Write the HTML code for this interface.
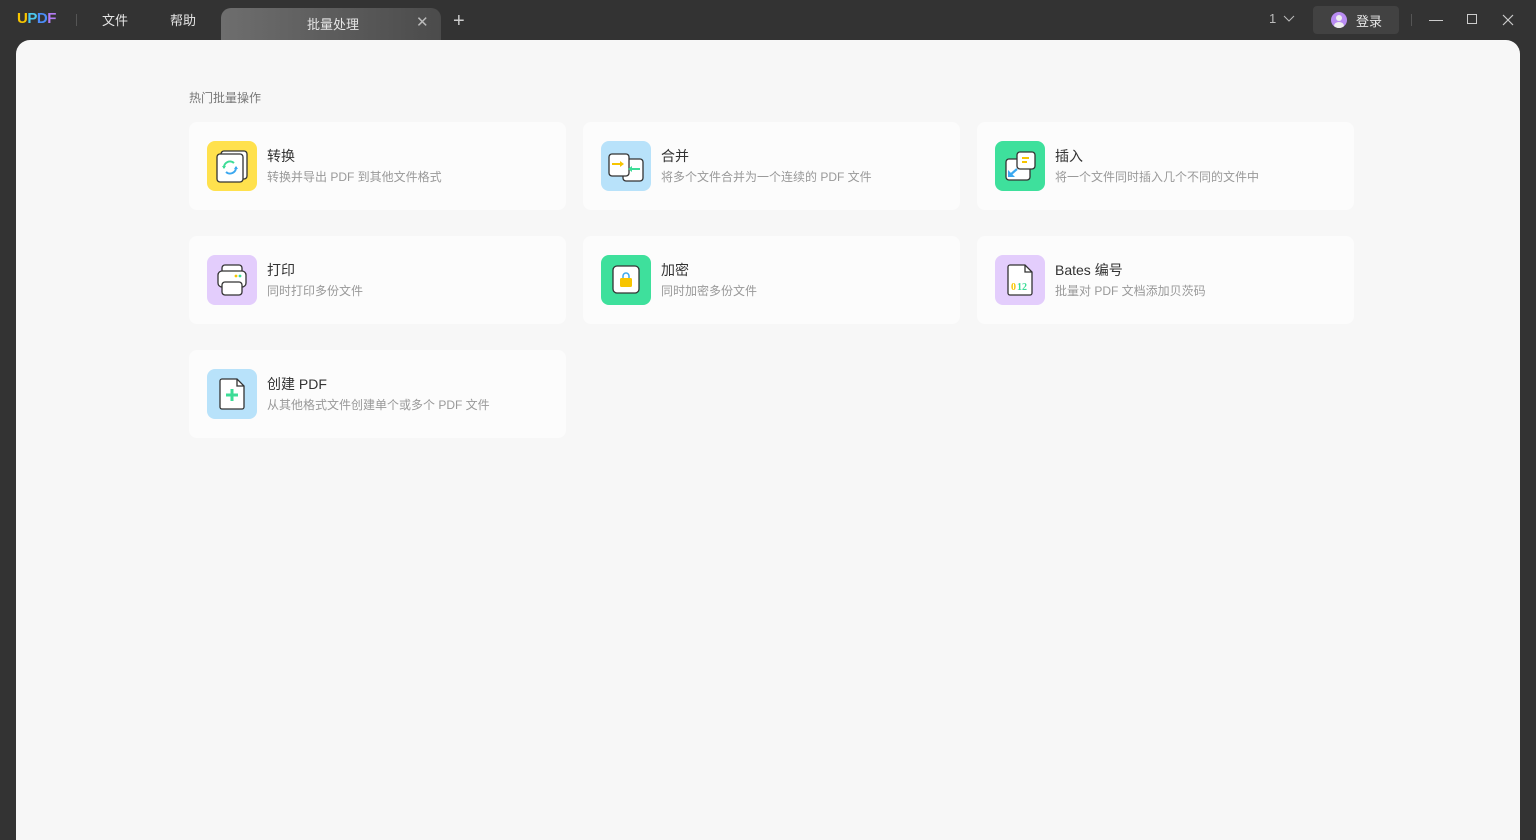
<!DOCTYPE html>
<html><head><meta charset="utf-8"><style>
*{margin:0;padding:0;box-sizing:border-box}
body{width:1536px;height:832px;background:#333;font-family:"Liberation Sans","Noto Sans CJK SC",sans-serif;position:relative;overflow:hidden}
.a{position:absolute}
.top{color:#e6e6e6;font-size:13px}
.main{left:16px;top:40px;width:1504px;height:800px;background:#f7f7f7;border-radius:14px 14px 0 0}
.card{position:absolute;width:377px;height:88px;background:#fcfcfc;border-radius:8px}
.ic{position:absolute;left:18px;top:19px;width:50px;height:50px;border-radius:8px}
.t{position:absolute;left:78px;top:24px;font-size:14px;color:#333}
.s{position:absolute;left:78px;top:46px;font-size:12px;color:#999}
.ic svg{position:absolute;left:0;top:0}
</style></head><body>
<div class="a" style="left:17px;top:10px;font-size:15px;font-weight:bold;letter-spacing:-0.5px"><span style="color:#f7c500">U</span><span style="color:#4cc9f0">P</span><span style="color:#4b8df8">D</span><span style="color:#b57cf5">F</span></div>
<div class="a" style="left:76px;top:14px;width:1px;height:12px;background:#555"></div>
<div class="a top" style="left:102px;top:10px">文件</div>
<div class="a top" style="left:170px;top:10px">帮助</div>
<div class="a" style="left:221px;top:8px;width:220px;height:32px;border-radius:10px 10px 0 0;background:linear-gradient(90deg,#6e6e6e,#4b4b4b)"></div>
<div class="a top" style="left:307px;top:14px">批量处理</div>
<div class="a" style="left:416px;top:13px;color:#bbb;font-size:15px">✕</div>
<div class="a" style="left:453px;top:10px;color:#ccc;font-size:20px;font-weight:300">+</div>
<div class="a top" style="left:1269px;top:11px;color:#bbb">1</div>
<svg class="a" style="left:1283px;top:15px" width="12" height="8"><path d="M1 1l5 5 5-5" stroke="#bbb" fill="none"/></svg>
<div class="a" style="left:1313px;top:6px;width:86px;height:28px;background:#424242;border-radius:4px"></div>
<div class="a" style="left:1331px;top:12px;width:16px;height:16px;border-radius:50%;background:#b98cf2;overflow:hidden"><div class="a" style="left:5px;top:3px;width:6px;height:6px;border-radius:50%;background:#eee"></div><div class="a" style="left:3px;top:10px;width:10px;height:8px;border-radius:50%;background:#eee"></div></div>
<div class="a top" style="left:1356px;top:11px">登录</div>
<div class="a" style="left:1411px;top:14px;width:1px;height:12px;background:#555"></div>
<div class="a" style="left:1429px;top:20px;width:14px;height:1px;background:#ccc"></div>
<div class="a" style="left:1467px;top:14px;width:10px;height:10px;border:1px solid #ccc"></div>
<svg class="a" style="left:1502px;top:14px" width="12" height="12"><path d="M1 1l10 10M11 1L1 11" stroke="#ccc" stroke-width="1.2"/></svg>

<div class="a main"></div>
<div class="a" style="left:189px;top:89px;font-size:12px;color:#777">热门批量操作</div>

<div class="card" style="left:189px;top:122px"><div class="ic" style="background:#ffe14d"><svg width="50" height="50"><rect x="14" y="10" width="26" height="28" rx="3" fill="#fff" stroke="#333" stroke-width="1.3"/><rect x="10" y="13" width="26" height="28" rx="3" fill="#fff" stroke="#333" stroke-width="1.3"/><path d="M17 27a6 6 0 0 1 10-5" stroke="#3ddc97" stroke-width="2" fill="none"/><path d="M29 26a6 6 0 0 1-10 5" stroke="#3ba8f0" stroke-width="2" fill="none"/><path d="M15 25l2 3 2-3z" fill="#3ddc97"/><path d="M27 28l2-3 2 3z" fill="#3ba8f0"/></svg></div><div class="t">转换</div><div class="s">转换并导出 PDF 到其他文件格式</div></div>
<div class="card" style="left:583px;top:122px"><div class="ic" style="background:#b8e2fa"><svg width="50" height="50"><rect x="22" y="18" width="20" height="22" rx="3" fill="#fff" stroke="#333" stroke-width="1.3"/><rect x="8" y="13" width="20" height="22" rx="3" fill="#fff" stroke="#333" stroke-width="1.3"/><path d="M11 23h9" stroke="#f7c500" stroke-width="2"/><path d="M19 20l4 3-4 3z" fill="#f7c500"/><path d="M31 28h8" stroke="#3ddc97" stroke-width="2"/><path d="M31 25l-4 3 4 3z" fill="#3ddc97"/></svg></div><div class="t">合并</div><div class="s">将多个文件合并为一个连续的 PDF 文件</div></div>
<div class="card" style="left:977px;top:122px"><div class="ic" style="background:#3ee09c"><svg width="50" height="50"><rect x="11" y="18" width="24" height="21" rx="3" fill="#fff" stroke="#333" stroke-width="1.3"/><rect x="22" y="11" width="18" height="17" rx="3" fill="#fff" stroke="#333" stroke-width="1.3"/><path d="M27 17h7M27 21h5" stroke="#f7c500" stroke-width="2"/><path d="M22 28l-8 7" stroke="#3ba8f0" stroke-width="2.2"/><path d="M13 29v7h7z" fill="#3ba8f0"/></svg></div><div class="t">插入</div><div class="s">将一个文件同时插入几个不同的文件中</div></div>

<div class="card" style="left:189px;top:236px"><div class="ic" style="background:#e3cdfc"><svg width="50" height="50"><rect x="15" y="10" width="20" height="10" rx="3" fill="#fff" stroke="#333" stroke-width="1.3"/><rect x="11" y="16" width="28" height="16" rx="4" fill="#fff" stroke="#333" stroke-width="1.3"/><rect x="15" y="27" width="20" height="13" rx="3" fill="#fff" stroke="#333" stroke-width="1.3"/><circle cx="29" cy="21" r="1.4" fill="#f7c500"/><circle cx="33" cy="21" r="1.4" fill="#3ddc97"/></svg></div><div class="t">打印</div><div class="s">同时打印多份文件</div></div>
<div class="card" style="left:583px;top:236px"><div class="ic" style="background:#3ee09c"><svg width="50" height="50"><rect x="12" y="11" width="26" height="27" rx="4" fill="#fff" stroke="#333" stroke-width="1.3"/><path d="M22 23v-2a3 3 0 0 1 6 0v2" stroke="#3ba8f0" stroke-width="1.5" fill="none"/><rect x="19" y="23" width="12" height="9" rx="1.5" fill="#f7c500"/></svg></div><div class="t">加密</div><div class="s">同时加密多份文件</div></div>
<div class="card" style="left:977px;top:236px"><div class="ic" style="background:#e3cdfc"><svg width="50" height="50"><path d="M15 10h15l7 7v21a2 2 0 0 1-2 2H15a2 2 0 0 1-2-2V12a2 2 0 0 1 2-2z" fill="#fff" stroke="#333" stroke-width="1.3"/><path d="M30 10v7h7" fill="none" stroke="#333" stroke-width="1.3"/><text x="16" y="35" font-family="Liberation Serif,serif" font-weight="bold" font-size="10" fill="#f7c500">0</text><text x="22" y="35" font-family="Liberation Serif,serif" font-weight="bold" font-size="10" fill="#3ddc97">12</text></svg></div><div class="t">Bates 编号</div><div class="s">批量对 PDF 文档添加贝茨码</div></div>

<div class="card" style="left:189px;top:350px"><div class="ic" style="background:#b8e2fa"><svg width="50" height="50"><path d="M15 10h15l7 7v21a2 2 0 0 1-2 2H15a2 2 0 0 1-2-2V12a2 2 0 0 1 2-2z" fill="#fff" stroke="#333" stroke-width="1.3"/><path d="M30 10v7h7" fill="none" stroke="#333" stroke-width="1.3"/><path d="M25 20v12M19 26h12" stroke="#3ddc97" stroke-width="3"/></svg></div><div class="t">创建 PDF</div><div class="s">从其他格式文件创建单个或多个 PDF 文件</div></div>
</body></html>
